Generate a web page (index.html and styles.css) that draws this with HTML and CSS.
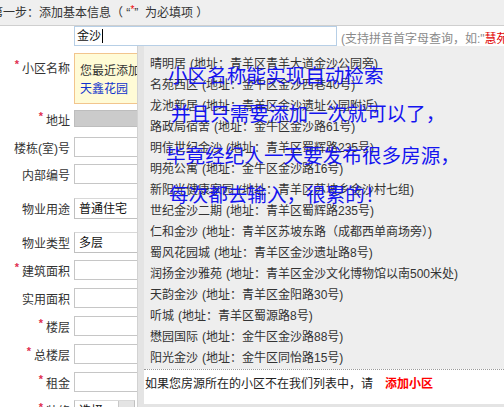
FILE: index.html
```html
<!DOCTYPE html>
<html lang="zh">
<head>
<meta charset="utf-8">
<title>添加基本信息</title>
<link rel="stylesheet" href="styles.css">
</head>
<body>
<div class="page">
  <div class="header"><span class="header-text">第一步：添加基本信息<span class="hd-paren">（</span> “<span class="req">*</span>”&nbsp;&nbsp;为必填项 ）</span></div>

  <div class="form">
    <div class="row row-name">
      <div class="lbl"><span class="star">*</span>小区名称</div>
      <div class="field-col">
        <div class="name-line">
          <div class="input input-active">金沙<span class="caret"></span></div>
          <span class="hint">(支持拼音首字母查询，如:"<span class="hint-red">慧苑</span>"</span>
        </div>
        <div class="recent">
          <div class="recent-line">您最近添加过</div>
          <a class="recent-link">天鑫花园</a>
        </div>
      </div>
    </div>

    <div class="row row-addr">
      <div class="lbl"><span class="star">*</span>地址</div>
      <div class="input input-gray"></div>
    </div>
    <div class="row row-room">
      <div class="lbl">楼栋(室)号</div>
      <div class="input"></div>
    </div>
    <div class="row row-code">
      <div class="lbl">内部编号</div>
      <div class="input"></div>
    </div>
    <div class="row row-sel">
      <div class="lbl">物业用途</div>
      <div class="select">普通住宅</div>
    </div>
    <div class="row row-sel">
      <div class="lbl">物业类型</div>
      <div class="select">多层</div>
    </div>
    <div class="row">
      <div class="lbl"><span class="star">*</span>建筑面积</div>
      <div class="input"></div>
    </div>
    <div class="row">
      <div class="lbl">实用面积</div>
      <div class="input"></div>
    </div>
    <div class="row">
      <div class="lbl"><span class="star">*</span>楼层</div>
      <div class="input"></div>
    </div>
    <div class="row">
      <div class="lbl"><span class="star">*</span>总楼层</div>
      <div class="input"></div>
    </div>
    <div class="row">
      <div class="lbl"><span class="star">*</span>租金</div>
      <div class="input"></div>
    </div>
    <div class="row">
      <div class="lbl"><span class="star">*</span>装修</div>
      <div class="select select-small">选择<span class="sel-arrow"></span></div>
    </div>
  </div>

  <div class="suggest">
    <div class="suggest-inner">
      <ul class="list">
        <li>晴明居<span class="addr">(地址：青羊区青羊大道金沙公园旁)</span></li>
        <li>名苑西区<span class="addr">(地址：金牛区金沙西巷40号)</span></li>
        <li>龙池新居<span class="addr">(地址：青羊区金沙遗址公园附近)</span></li>
        <li>路政局宿舍<span class="addr">(地址：金牛区金沙路61号)</span></li>
        <li>明信世纪金沙<span class="addr">(地址：青羊区蜀辉路235号)</span></li>
        <li>明苑公寓<span class="addr">(地址：金牛区金沙路16号)</span></li>
        <li>新阳光健康家园<span class="addr">(地址：青羊区苏坡乡金沙村七组)</span></li>
        <li>世纪金沙二期<span class="addr">(地址：青羊区蜀辉路235号)</span></li>
        <li>仁和金沙<span class="addr">(地址：青羊区苏坡东路（成都西单商场旁）)</span></li>
        <li>蜀风花园城<span class="addr">(地址：青羊区金沙遗址路8号)</span></li>
        <li>润扬金沙雅苑<span class="addr">(地址：青羊区金沙文化博物馆以南500米处)</span></li>
        <li>天韵金沙<span class="addr">(地址：青羊区金阳路30号)</span></li>
        <li>听城<span class="addr">(地址：青羊区蜀源路8号)</span></li>
        <li>懋园国际<span class="addr">(地址：金牛区金沙路88号)</span></li>
        <li>阳光金沙<span class="addr">(地址：金牛区同怡路15号)</span></li>
      </ul>
      <div class="foot">如果您房源所在的小区不在我们列表中，请<a class="add-link">添加小区</a></div>
    </div>
  </div>

  <div class="note note-1">小区名称能实现自动检索</div>
  <div class="note note-2">并且只需要添加一次就可以了，</div>
  <div class="note note-3">毕竟经纪人一天要发布很多房源，</div>
  <div class="note note-4">每次都去输入，很累的！</div>
</div>
</body>
</html>
```

FILE: styles.css
```css
html, body {
  margin: 0;
  padding: 0;
  background: #fff;
}
body {
  font-family: "Liberation Sans", "Noto Sans CJK SC", sans-serif;
  font-size: 12px;
  color: #333;
  overflow: hidden;
}
.page {
  position: relative;
  width: 504px;
  height: 407px;
  overflow: hidden;
}

/* header */
.header {
  height: 25px;
  line-height: 25px;
  background: #efefef;
  border-bottom: 1px solid #cfcfcf;
  white-space: nowrap;
}
.header-text {
  margin-left: -9px;
  display: inline-block;
  padding-top: 1px;
  line-height: 24px;
}
.req {
  color: #e00;
  font-size: 10px;
  vertical-align: top;
  position: relative;
  top: -3px;
}

/* form */
.form {
  display: flex;
  flex-direction: column;
}
.row {
  display: flex;
  align-items: center;
  height: 20px;
  margin-top: 8px;
}
.lbl {
  width: 70px;
  text-align: right;
  white-space: nowrap;
  line-height: 20px;
  padding-top: 4px;
  flex: none;
}
.star {
  color: #e03050;
  font-size: 11px;
  font-weight: bold;
  position: relative;
  top: -5px;
  margin-right: 3px;
}
.input {
  margin-left: 4px;
  width: 300px;
  height: 18px;
  border: 1px solid #c6c6c6;
  background: #fff;
  flex: none;
}

.row-name {
  height: 82px;
  margin-top: 0;
  align-items: center;
}
.field-col {
  align-self: flex-start;
  margin-left: 4px;
  display: flex;
  flex-direction: column;
}
.name-line {
  display: flex;
  align-items: center;
  height: 20px;
}
.input-active {
  margin-left: 0;
  width: 263px;
  border-color: #b7cfe6;
  line-height: 18px;
  padding-left: 2px;
  box-sizing: border-box;
  height: 20px;
  display: flex;
  align-items: center;
  color: #111;
  font-size: 12px;
}
.caret {
  display: inline-block;
  width: 1px;
  height: 14px;
  background: #000;
  margin-left: 1px;
}
.hint {
  margin-left: 4px;
  color: #8a8a8a;
  white-space: nowrap;
  padding-top: 2px;
}
.hint-red {
  color: #e00000;
}
.recent {
  margin-top: 7px;
  width: 200px;
  background: #fffbd6;
  border: 1px solid #f2c58d;
  padding: 8px 0 0 5px;
  height: 41px;
  line-height: 18px;
  white-space: nowrap;
}
.recent-link {
  color: #1133cc;
}

.row-addr {
  margin-top: 2px;
  height: 17px;
}
.input-gray {
  height: 15px;
  background: #cbcbcb;
  border-color: #bdbdbd;
}
.row-room {
  margin-top: 10px;
}
.row-code {
  margin-top: 7px;
}
.row-sel {
  margin-top: 14px;
}
.select {
  margin-left: 4px;
  width: 300px;
  height: 18px;
  line-height: 18px;
  border: 1px solid #c0c0c0;
  border-top-color: #d8d8d8;
  background: #fff;
  padding-left: 4px;
  padding-top: 1px;
  box-sizing: content-box;
  color: #111;
  flex: none;
  position: relative;
}
.select-small {
  width: 55px;
}
.sel-arrow {
  position: absolute;
  right: 0;
  top: 0;
  width: 15px;
  height: 19px;
  background: #e4e4e4;
  border-left: 1px solid #c8c8c8;
}

/* suggestion dropdown */
.suggest {
  position: absolute;
  left: 137px;
  top: 46px;
  right: -20px;
  bottom: 0;
  background: #e4e4e4;
  border-left: 1px solid #d2d2d2;
  padding-left: 6px;
}
.suggest-inner {
  background: #eeeeee;
}
.list {
  list-style: none;
  margin: 0;
  padding: 6px 0 2px 6px;
}
.list li {
  height: 19px;
  padding-top: 2px;
  line-height: 21px;
  white-space: nowrap;
  color: #333;
}
.addr {
  margin-left: 4px;
}
.foot {
  border-top: 1px dotted #9a9a9a;
  background: #fff;
  padding: 4px 0 10px 1px;
  line-height: 20px;
  white-space: nowrap;
  color: #222;
}
.add-link {
  margin-left: 12px;
  color: #f00;
  font-weight: bold;
}

/* annotation overlay */
.note {
  position: absolute;
  color: #1414f0;
  font-size: 19.6px;
  line-height: 20px;
  white-space: nowrap;
  font-family: "Noto Sans CJK SC", sans-serif;
}
.note-1 { left: 168px; top: 65px; }
.note-2 { left: 171px; top: 103px; }
.note-3 { left: 166px; top: 145px; }
.note-4 { left: 169px; top: 184px; }
```
